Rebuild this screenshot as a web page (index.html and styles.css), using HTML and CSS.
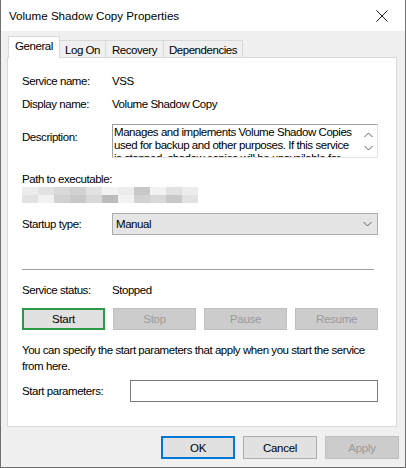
FILE: index.html
```html
<!DOCTYPE html>
<html lang="en">
<head>
    <meta charset="UTF-8">
    <meta name="viewport" content="width=device-width, initial-scale=1.0">
    <title>Volume Shadow Copy Properties</title>
    <link rel="stylesheet" href="styles.css">
</head>
<body>
    <div class="window">
        <div class="titlebar">
            <span class="title">Volume Shadow Copy Properties</span>
            <span class="close">
                <svg width="12" height="12" viewBox="0 0 12 12"><path d="M0.5 0.5 L11.5 11.5 M11.5 0.5 L0.5 11.5" stroke="#1a1a1a" stroke-width="1" fill="none"/></svg>
            </span>
        </div>

        <div class="tabs">
            <div class="tab active tab-general">General</div>
            <div class="tab tab-logon">Log On</div>
            <div class="tab tab-recovery">Recovery</div>
            <div class="tab tab-deps">Dependencies</div>
        </div>

        <div class="panel">
            <div class="row row-name">
                <span class="label">Service name:</span>
                <span>VSS</span>
            </div>
            <div class="row row-display">
                <span class="label">Display name:</span>
                <span>Volume Shadow Copy</span>
            </div>
            <div class="row row-desc">
                <span class="label">Description:</span>
                <div class="desc-box">
                    <div class="desc-text">Manages and implements Volume Shadow Copies used for backup and other purposes. If this service is stopped, shadow copies will be unavailable for</div>
                    <div class="desc-scroll">
                        <svg width="9" height="6" viewBox="0 0 9 6"><path d="M0.5 5 L4.5 1 L8.5 5" stroke="#606060" fill="none"/></svg>
                        <svg width="9" height="6" viewBox="0 0 9 6"><path d="M0.5 1 L4.5 5 L8.5 1" stroke="#606060" fill="none"/></svg>
                    </div>
                </div>
            </div>

            <div class="path-label">Path to executable:</div>
            <!-- path is pixelated in the source, drawn as a mosaic -->
            <div class="path-blur">
                <span class="b1"></span><span class="b3"></span><span class="b6"></span><span class="b2"></span><span class="b3"></span><span class="b5"></span><span class="b1"></span><span class="b4"></span><span class="b5"></span><span class="b3"></span><span class="b1"></span>
                <span class="b3"></span><span class="b5"></span><span class="b2"></span><span class="b4"></span><span class="b6"></span><span class="b7"></span><span class="b5"></span><span class="b2"></span><span class="b6"></span><span class="b4"></span><span class="b3"></span>
            </div>

            <div class="row row-startup">
                <span class="label">Startup type:</span>
                <div class="combo">
                    <span>Manual</span>
                    <svg width="9" height="6" viewBox="0 0 9 6"><path d="M0.5 1 L4.5 5 L8.5 1" stroke="#606060" fill="none"/></svg>
                </div>
            </div>

            <div class="separator"></div>

            <div class="row row-status">
                <span class="label">Service status:</span>
                <span>Stopped</span>
            </div>

            <div class="service-buttons">
                <button class="btn btn-focus-green">Start</button>
                <button class="btn" disabled>Stop</button>
                <button class="btn" disabled>Pause</button>
                <button class="btn" disabled>Resume</button>
            </div>

            <p class="hint">You can specify the start parameters that apply when you start the service from here.</p>

            <div class="row row-params">
                <span class="label">Start parameters:</span>
                <div class="param-input"></div>
            </div>
        </div>

        <div class="footer">
            <button class="btn btn-focus-blue">OK</button>
            <button class="btn">Cancel</button>
            <button class="btn" disabled>Apply</button>
        </div>
    </div>
</body>
</html>
```

FILE: styles.css
```css
body {
    margin: 0;
    padding: 0;
    font-family: "Liberation Sans", Arial, sans-serif;
    font-size: 11.5px;
    letter-spacing: -0.45px;
    color: #000;
    background: #f0f0f0;
}

.window {
    width: 406px;
    height: 468px;
    box-sizing: border-box;
    border-left: 1px solid #707070;
    border-right: 1px solid #707070;
    border-bottom: 1px solid #707070;
    background: #f0f0f0;
    display: flex;
    flex-direction: column;
}

.titlebar {
    height: 31px;
    background: #fff;
    display: flex;
    align-items: center;
    padding-left: 8px;
    font-size: 11.6px;
    letter-spacing: 0;
}

.close {
    margin-left: auto;
    width: 46px;
    display: flex;
    justify-content: center;
}

.tabs {
    display: flex;
    align-items: flex-end;
    margin-top: 6px;
    padding-left: 7px;
    height: 21px;
    margin-bottom: -1px;
}

.tab {
    box-sizing: border-box;
    height: 18px;
    padding-top: 1px;
    border: 1px solid #d9d9d9;
    border-bottom: none;
    border-left: none;
    background: #f0f0f0;
    display: flex;
    align-items: center;
    justify-content: center;
}

.tab.active {
    height: 22px;
    background: #fff;
    border-left: 1px solid #d9d9d9;
    padding: 0 0 3px;
    position: relative;
    z-index: 1;
}

.tab-general { width: 52px; }
.tab-logon { width: 46px; }
.tab-recovery { width: 58px; }
.tab-deps { width: 79px; }

.panel {
    box-sizing: border-box;
    width: 390px;
    height: 370px;
    margin-left: 6px;
    background: #fff;
    border: 1px solid #d9d9d9;
    padding: 0 18px 0 14px;
    display: flex;
    flex-direction: column;
}

.row {
    display: flex;
    align-items: center;
    line-height: 16px;
}

.label {
    width: 90px;
    flex-shrink: 0;
}

.row-name {
    margin-top: 15px;
    height: 16px;
}

.row-display {
    margin-top: 7px;
    height: 16px;
}

.row-desc {
    margin-top: 12px;
    align-items: flex-start;
}

.row-desc .label {
    padding-top: 5px;
}

.desc-box {
    flex: 1;
    height: 34px;
    box-sizing: border-box;
    border: 1px solid #a0a0a0;
    border-right-color: #e3e3e3;
    border-bottom-color: #e3e3e3;
    display: flex;
}

.desc-text {
    flex: 1;
    height: 32px;
    padding: 1px 2px 0 1px;
    box-sizing: border-box;
    line-height: 13px;
    overflow: hidden;
}

.desc-scroll {
    width: 17px;
    display: flex;
    flex-direction: column;
    align-items: center;
    justify-content: space-between;
    padding: 7px 0 6px;
    box-sizing: border-box;
    background: #fff;
}

.path-label {
    margin-top: 14px;
    line-height: 14px;
}

.path-blur {
    display: grid;
    grid-template-columns: repeat(11, 16px);
    grid-template-rows: 8px 8px;
    width: 176px;
    margin-top: 1px;
}

.b1 { background: #ececec; }
.b2 { background: #d2d2d2; }
.b3 { background: #e2e2e2; }
.b4 { background: #c8c8c8; }
.b5 { background: #f2f2f2; }
.b6 { background: #d9d9d9; }
.b7 { background: #bcbcbc; }

.row-startup {
    margin-top: 10px;
}

.combo {
    flex: 1;
    height: 22px;
    box-sizing: border-box;
    border: 1px solid #adadad;
    background: #e5e5e5;
    display: flex;
    align-items: center;
    justify-content: space-between;
    padding: 0 5px 0 3px;
}

.separator {
    margin-top: 34px;
    width: 352px;
    height: 1px;
    background: #a0a0a0;
}

.row-status {
    margin-top: 12px;
    height: 16px;
}

.service-buttons {
    margin-top: 10px;
    display: grid;
    grid-template-columns: repeat(4, 1fr);
    gap: 8px;
}

.btn {
    height: 22px;
    box-sizing: border-box;
    border: 1px solid #adadad;
    background: #e1e1e1;
    font-family: inherit;
    font-size: 11.5px;
    letter-spacing: -0.3px;
    color: #000;
    padding: 0;
}

.btn:disabled {
    background: #cccccc;
    border-color: #bfbfbf;
    color: #9a9a9a;
}

.btn-focus-green {
    border: 2px solid #2a9a48;
}

.btn-focus-blue {
    border: 2px solid #0078d7;
}

.hint {
    margin: 12px 0 0;
    line-height: 16px;
}

.row-params {
    margin-top: 6px;
}

.row-params .label {
    width: 108px;
}

.param-input {
    flex: 1;
    height: 22px;
    box-sizing: border-box;
    border: 1px solid #7a7a7a;
    background: #fff;
}

.footer {
    display: flex;
    justify-content: flex-end;
    gap: 8px;
    margin-top: 9px;
    padding-right: 6px;
}

.footer .btn {
    width: 74px;
    height: 23px;
}
```
